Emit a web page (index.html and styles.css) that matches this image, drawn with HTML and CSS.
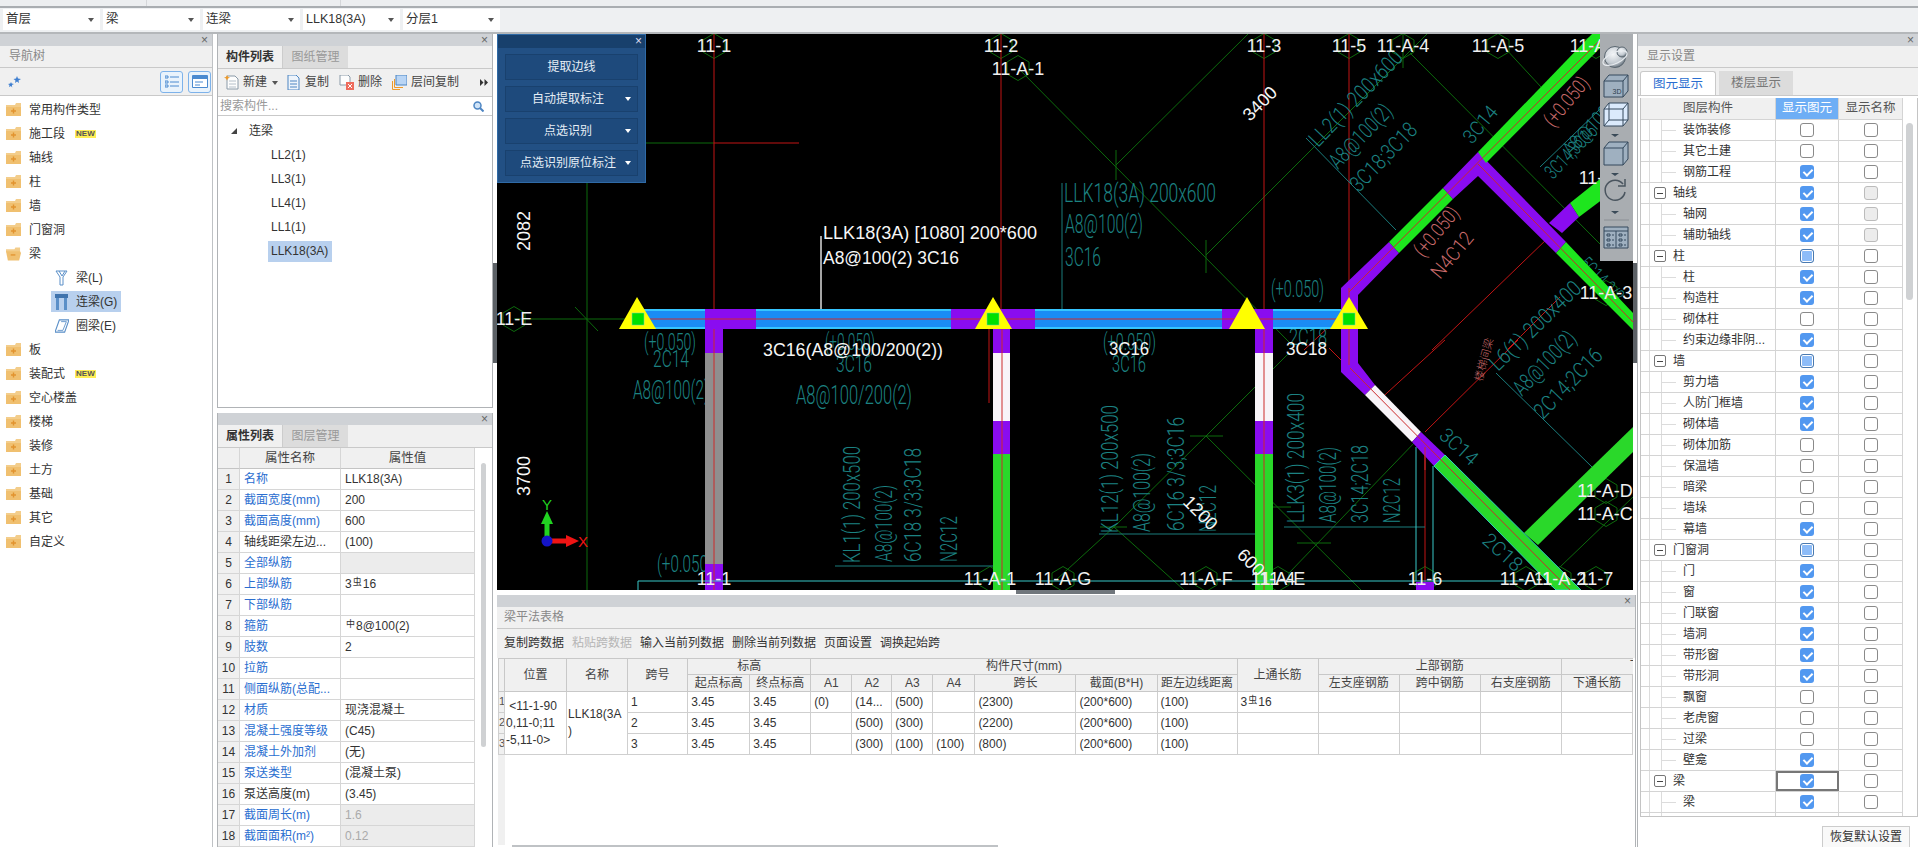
FILE: index.html
```html
<!DOCTYPE html>
<html lang="zh-CN">
<head>
<meta charset="utf-8">
<title>梁平法表格</title>
<link rel="stylesheet" href="styles.css">
</head>
<body>
<svg class="sprite" width="0" height="0">
  <defs>
    <symbol id="folder" viewBox="0 0 15 14"><path d="M0 2h9l1-2h5v13H0z" fill="#f3cd8b"/><path d="M0 4h15v9H0z" fill="#f0c070"/><path d="M7.5 5.5v5M5 8h5" stroke="#e2932f" stroke-width="1.4"/></symbol>
    <symbol id="folder-open" viewBox="0 0 16 14"><path d="M0 2h9l1-2h5v5H0z" fill="#f3cd8b"/><path d="M0 4h15l1 2-2 8H2z" fill="#f0c070"/><path d="M5 8h5" stroke="#e2932f" stroke-width="1.4"/></symbol>
    <polygon id="hx" points="0,-12.5 11,-6 11,6 0,12.5 -11,6 -11,-6" fill="none" stroke="#0d6a0d"/>
  </defs>
</svg>
<div class="app">
  <div class="topstrip"></div>
  <div class="combos">
    <div class="combo">首层<i class="caret"></i></div>
    <div class="combo">梁<i class="caret"></i></div>
    <div class="combo">连梁<i class="caret"></i></div>
    <div class="combo">LLK18(3A)<i class="caret"></i></div>
    <div class="combo">分层1<i class="caret"></i></div>
  </div>
  <div class="main">
    <section class="nav">
      <div class="titlebar"><span class="x">×</span></div>
      <div class="pane-head">导航树</div>
      <div class="nav-tools">
        <svg class="star" width="14" height="12" viewBox="0 0 14 12"><path d="M9 0l1 2.5L13 3l-2.500 1.500L11 7 9 5.500 7 7l.5-2.500L5.500 3 8 2.500zM3 6l.7 1.600L6 8 3.900 9 4.200 11.500 3 10 1 11l.5-2L0 8l2.300-.4z" fill="#3f7fd0"/></svg>
        <span class="ibtn"><svg width="14" height="13" viewBox="0 0 14 13"><path d="M0 1h3v2H0zM5 2h9M0 6h3v2H0zM5 7h9M0 10h3v2H0zM5 11h9" fill="none" stroke="#4a8ad0"/></svg></span>
        <span class="ibtn"><svg width="16" height="13" viewBox="0 0 16 13"><path d="M.5.5h15v12H.500z" fill="#fff" stroke="#4a8ad0"/><path d="M1 1h14v3H1z" fill="#4a8ad0"/><path d="M3 7h8M3 10h5" stroke="#4a8ad0"/></svg></span>
      </div>
      <ul class="nav-list">
        <li class="nav-item"><svg class="fd"><use href="#folder"/></svg>常用构件类型</li>
        <li class="nav-item"><svg class="fd"><use href="#folder"/></svg>施工段<span class="new">NEW</span></li>
        <li class="nav-item"><svg class="fd"><use href="#folder"/></svg>轴线</li>
        <li class="nav-item"><svg class="fd"><use href="#folder"/></svg>柱</li>
        <li class="nav-item"><svg class="fd"><use href="#folder"/></svg>墙</li>
        <li class="nav-item"><svg class="fd"><use href="#folder"/></svg>门窗洞</li>
        <li class="nav-item"><svg class="fd"><use href="#folder-open"/></svg>梁</li>
        <li class="nav-sub"><svg class="si" viewBox="0 0 14 16"><path d="M1 1h11L8 7v8H5V7zM4 1l3 5 3-5" fill="none" stroke="#5a8fc8"/></svg>梁(L)</li>
        <li class="nav-sub sel"><svg class="si" viewBox="0 0 14 16"><path d="M0 0h13v4H0z" fill="#3f73ad"/><path d="M1 4h3v12H1zM9 4h3v12H9z" fill="#5a8fc8"/></svg>连梁(G)</li>
        <li class="nav-sub"><svg class="si" viewBox="0 0 16 16"><path d="M5 1h11l-5 14H0z" fill="none" stroke="#5a8fc8" stroke-width="1.300"/><path d="M7 3h6l-4 10H3" fill="none" stroke="#5a8fc8"/></svg>圈梁(E)</li>
        <li class="nav-item"><svg class="fd"><use href="#folder"/></svg>板</li>
        <li class="nav-item"><svg class="fd"><use href="#folder"/></svg>装配式<span class="new">NEW</span></li>
        <li class="nav-item"><svg class="fd"><use href="#folder"/></svg>空心楼盖</li>
        <li class="nav-item"><svg class="fd"><use href="#folder"/></svg>楼梯</li>
        <li class="nav-item"><svg class="fd"><use href="#folder"/></svg>装修</li>
        <li class="nav-item"><svg class="fd"><use href="#folder"/></svg>土方</li>
        <li class="nav-item"><svg class="fd"><use href="#folder"/></svg>基础</li>
        <li class="nav-item"><svg class="fd"><use href="#folder"/></svg>其它</li>
        <li class="nav-item"><svg class="fd"><use href="#folder"/></svg>自定义</li>
      </ul>
    </section>

    <div class="midcol">
      <section class="panel list-panel">
        <div class="titlebar"><span class="x">×</span></div>
        <div class="tabs"><span class="tab on">构件列表</span><span class="tab">图纸管理</span></div>
        <div class="list-tools">
          <svg class="ti" viewBox="0 0 15 15"><path d="M3 1h8l3 3v10H3z" fill="#fdfdfd" stroke="#8a9aa8"/><path d="M5 6h7M5 9h7M5 12h7" stroke="#b5c0ca"/><path d="M3 0l1 2 2 .5-2 1-1 2-1-2-2-1 2-.5z" fill="#ee9a2a"/></svg>
          <span class="tl">新建</span><i class="caret dark"></i>
          <svg class="ti" viewBox="0 0 15 15"><path d="M2 0h8l3 3v12H2z" fill="#eef4fb" stroke="#4d85c2"/><path d="M4 6h7M4 9h7M4 12h7" stroke="#4d85c2"/></svg>
          <span class="tl">复制</span>
          <svg class="ti" viewBox="0 0 15 15"><path d="M1 0h8l2 2v8H1z" fill="#fdfdfd" stroke="#8a9aa8"/><path d="M7 7h8v8H7z" fill="#ee6b5c"/><path d="M9 9l4 4M13 9l-4 4" stroke="#fff"/></svg>
          <span class="tl">删除</span>
          <svg class="ti" viewBox="0 0 15 15"><path d="M4 0h11v10H4z" fill="#b9d5f5" stroke="#4d85c2"/><path d="M2.500 4v8.500H11M.5 6v8.500H8" fill="none" stroke="#ee9a2a"/></svg>
          <span class="tl">层间复制</span>
          <svg class="more" width="8" height="7" viewBox="0 0 8 7"><path d="M0 0l3.500 3.500L0 7zM4.500 0L8 3.500 4.500 7z" fill="#333"/></svg>
        </div>
        <div class="search"><span>搜索构件...</span><svg width="11" height="11" viewBox="0 0 11 11"><circle cx="4.500" cy="4.500" r="3.500" fill="#cfe3f7" stroke="#4d85c2" stroke-width="1.500"/><path d="M7 7l3.500 3.500" stroke="#4d85c2" stroke-width="2"/></svg></div>
        <div class="tree">
          <div class="tree-root"><i class="tri"></i>连梁</div>
          <div class="tree-leaf"><span>LL2(1)</span></div>
          <div class="tree-leaf"><span>LL3(1)</span></div>
          <div class="tree-leaf"><span>LL4(1)</span></div>
          <div class="tree-leaf"><span>LL1(1)</span></div>
          <div class="tree-leaf"><span class="sel">LLK18(3A)</span></div>
        </div>
      </section>
      <section class="panel attr-panel">
        <div class="titlebar"><span class="x">×</span></div>
        <div class="tabs"><span class="tab on">属性列表</span><span class="tab">图层管理</span></div>
        <div class="attr-body">
          <div class="attr-grid">
            <div class="ah n"></div><div class="ah">属性名称</div><div class="ah">属性值</div>
            <div class="n">1</div><div class="k">名称</div><div class="v">LLK18(3A)</div>
            <div class="n">2</div><div class="k">截面宽度(mm)</div><div class="v">200</div>
            <div class="n">3</div><div class="k">截面高度(mm)</div><div class="v">600</div>
            <div class="n">4</div><div class="k blk">轴线距梁左边...</div><div class="v">(100)</div>
            <div class="n">5</div><div class="k">全部纵筋</div><div class="v dis"></div>
            <div class="n">6</div><div class="k">上部纵筋</div><div class="v">3<sup class="rb">虫</sup>16</div>
            <div class="n">7</div><div class="k">下部纵筋</div><div class="v"></div>
            <div class="n">8</div><div class="k">箍筋</div><div class="v"><sup class="rb">中</sup>8@100(2)</div>
            <div class="n">9</div><div class="k">肢数</div><div class="v">2</div>
            <div class="n">10</div><div class="k">拉筋</div><div class="v"></div>
            <div class="n">11</div><div class="k">侧面纵筋(总配...</div><div class="v"></div>
            <div class="n">12</div><div class="k">材质</div><div class="v">现浇混凝土</div>
            <div class="n">13</div><div class="k">混凝土强度等级</div><div class="v">(C45)</div>
            <div class="n">14</div><div class="k">混凝土外加剂</div><div class="v">(无)</div>
            <div class="n">15</div><div class="k">泵送类型</div><div class="v">(混凝土泵)</div>
            <div class="n">16</div><div class="k blk">泵送高度(m)</div><div class="v">(3.45)</div>
            <div class="n">17</div><div class="k">截面周长(m)</div><div class="v dis gr">1.6</div>
            <div class="n">18</div><div class="k">截面面积(m²)</div><div class="v dis gr">0.12</div>
          </div>
          <div class="attr-track"><div class="attr-thumb"></div></div>
        </div>
      </section>
    </div>
    <div class="split"></div>

    <div class="center">
      <div class="view-row">
        <div class="viewport">
          <svg class="cad" width="1136" height="556" viewBox="497 34 1136 556" xmlns="http://www.w3.org/2000/svg">
            <rect x="497" y="34" width="1136" height="556" fill="#000"/>
            <g class="gl">
              <path d="M587 182V590M514 319H625M575 307L598 331M646 143H714"/>
              <path d="M1018 68L1289 342M1116 165L1248 34M1206 255L1427 34M1410 53L1600 244M1504 47L1541 87"/>
              <path d="M1116 150V180M1206 240V273M1403 34V68"/>
              <path d="M1056 580L1114 527L1206 436L1289 353M1114 527L1184 590M1206 436L1361 590M1289 573L1417 440"/>
              <path d="M1190 436H1223M1100 527H1127M1261 507H1291M1297 543H1331"/>
              <path d="M1560 567L1633 497"/>
            </g>
            <use href="#hx" x="714" y="46"/><use href="#hx" x="1001" y="46"/><use href="#hx" x="1018" y="68"/>
            <use href="#hx" x="1264" y="46"/><use href="#hx" x="1349" y="46"/><use href="#hx" x="1403" y="46"/><use href="#hx" x="1498" y="46"/><use href="#hx" x="1596" y="46"/>
            <use href="#hx" x="514" y="319"/><use href="#hx" x="1606" y="293"/><use href="#hx" x="1606" y="491"/><use href="#hx" x="1606" y="514"/>
            <use href="#hx" x="990" y="579"/><use href="#hx" x="1063" y="579"/><use href="#hx" x="1206" y="579"/><use href="#hx" x="1278" y="579"/><use href="#hx" x="1425" y="579"/><use href="#hx" x="1526" y="579"/><use href="#hx" x="1560" y="579"/><use href="#hx" x="1596" y="579"/>

            <g class="rl">
              <path d="M714 34V309M1001 34V309M1264 34V309M1349 34V309M714 143H799M989 329V403"/>
              <path d="M1304 350L1349 308M1376 403L1445 340M1425 432L1518 340M1432 350L1549 237M1507 350L1560 297M1329 348L1376 395"/>
              <path d="M1425 447V590"/>
            </g>

            <g class="t-t">
              <text x="1064" y="202" textLength="152" lengthAdjust="spacingAndGlyphs" font-size="25">LLK18(3A) 200x600</text>
              <text x="1065" y="233" textLength="78" lengthAdjust="spacingAndGlyphs" font-size="25">A8@100(2)</text>
              <text x="1065" y="266" textLength="36" lengthAdjust="spacingAndGlyphs" font-size="25">3C16</text>
              <text x="1271" y="297" textLength="53" lengthAdjust="spacingAndGlyphs" font-size="24">(+0.050)</text>
              <text x="644" y="350" textLength="52" lengthAdjust="spacingAndGlyphs" font-size="24">(+0.050)</text>
              <text x="653" y="367" textLength="36" lengthAdjust="spacingAndGlyphs" font-size="24">2C14</text>
              <text x="633" y="399" textLength="76" lengthAdjust="spacingAndGlyphs" font-size="25">A8@100(2)</text>
              <text x="825" y="350" textLength="50" lengthAdjust="spacingAndGlyphs" font-size="24">(+0.050)</text>
              <text x="836" y="372" textLength="36" lengthAdjust="spacingAndGlyphs" font-size="24">3C16</text>
              <text x="796" y="404" textLength="116" lengthAdjust="spacingAndGlyphs" font-size="25">A8@100/200(2)</text>
              <text x="1103" y="350" textLength="53" lengthAdjust="spacingAndGlyphs" font-size="24">(+0.050)</text>
              <text x="1112" y="372" textLength="34" lengthAdjust="spacingAndGlyphs" font-size="24">3C16</text>
              <text x="1289" y="345" textLength="38" lengthAdjust="spacingAndGlyphs" font-size="24">2C18</text>
              <text x="657" y="572" textLength="51" lengthAdjust="spacingAndGlyphs" font-size="24">(+0.050</text>

              <text transform="translate(860,563) rotate(-90)" textLength="117" lengthAdjust="spacingAndGlyphs" font-size="24">KL1(1) 200x500</text>
              <text transform="translate(892,562) rotate(-90)" textLength="77" lengthAdjust="spacingAndGlyphs" font-size="24">A8@100(2)</text>
              <text transform="translate(921,562) rotate(-90)" textLength="114" lengthAdjust="spacingAndGlyphs" font-size="24">6C18 3/3;3C18</text>
              <text transform="translate(957,562) rotate(-90)" textLength="46" lengthAdjust="spacingAndGlyphs" font-size="24">N2C12</text>
              <text transform="translate(1118,533) rotate(-90)" textLength="128" lengthAdjust="spacingAndGlyphs" font-size="24">KL12(1) 200x500</text>
              <text transform="translate(1150,532) rotate(-90)" textLength="79" lengthAdjust="spacingAndGlyphs" font-size="24">A8@100(2)</text>
              <text transform="translate(1184,531) rotate(-90)" textLength="114" lengthAdjust="spacingAndGlyphs" font-size="24">6C16 3/3;3C16</text>
              <text transform="translate(1216,532) rotate(-90)" textLength="47" lengthAdjust="spacingAndGlyphs" font-size="24">N2C12</text>
              <text transform="translate(1304,523) rotate(-90)" textLength="130" lengthAdjust="spacingAndGlyphs" font-size="24">LLK3(1) 200x400</text>
              <text transform="translate(1336,523) rotate(-90)" textLength="76" lengthAdjust="spacingAndGlyphs" font-size="24">A8@100(2)</text>
              <text transform="translate(1368,523) rotate(-90)" textLength="78" lengthAdjust="spacingAndGlyphs" font-size="24">3C14;2C18</text>
              <text transform="translate(1400,523) rotate(-90)" textLength="45" lengthAdjust="spacingAndGlyphs" font-size="24">N2C12</text>

              <text transform="translate(1318,148) rotate(-46)" textLength="124" lengthAdjust="spacingAndGlyphs" font-size="22">LL2(1) 200x600</text>
              <text transform="translate(1338,170) rotate(-46)" textLength="80" lengthAdjust="spacingAndGlyphs" font-size="22">A8@100(2)</text>
              <text transform="translate(1359,193) rotate(-46)" textLength="86" lengthAdjust="spacingAndGlyphs" font-size="22">3C18;3C18</text>
              <text transform="translate(1472,145) rotate(-50)" textLength="42" lengthAdjust="spacingAndGlyphs" font-size="20">3C14</text>
              <text transform="translate(1571,157) rotate(-46)" textLength="60" lengthAdjust="spacingAndGlyphs" font-size="20">A8@100</text>
              <text transform="translate(1553,180) rotate(-46)" textLength="66" lengthAdjust="spacingAndGlyphs" font-size="20">3C14;3C16</text>
              <text transform="translate(1438,437) rotate(42)" textLength="44" lengthAdjust="spacingAndGlyphs" font-size="20">3C14</text>
              <text transform="translate(1481,542) rotate(42)" textLength="46" lengthAdjust="spacingAndGlyphs" font-size="20">2C18</text>
              <text transform="translate(1498,372) rotate(-44)" textLength="118" lengthAdjust="spacingAndGlyphs" font-size="22">L6(1) 200x400</text>
              <text transform="translate(1522,397) rotate(-46)" textLength="80" lengthAdjust="spacingAndGlyphs" font-size="22">A8@100(2)</text>
              <text transform="translate(1543,420) rotate(-46)" textLength="88" lengthAdjust="spacingAndGlyphs" font-size="22">2C14;2C16</text>
              <text transform="translate(1578,265) rotate(46)" textLength="54" lengthAdjust="spacingAndGlyphs" font-size="20">5C14 3/2</text>
            </g>
            <g class="tl-line">
              <path d="M1062 183V309M1306 138L1396 230M1540 167L1600 109M835 566H993M1099 534H1264M1284 527H1425M1496 373L1592 467"/>
            </g>
            <g class="t-s">
              <text transform="translate(1553,128) rotate(-50)" textLength="58" lengthAdjust="spacingAndGlyphs" font-size="20">(+0.050)</text>
              <text transform="translate(1423,258) rotate(-50)" textLength="58" lengthAdjust="spacingAndGlyphs" font-size="20">(+0.050)</text>
              <text transform="translate(1440,280) rotate(-50)" textLength="54" lengthAdjust="spacingAndGlyphs" font-size="20">N4C12</text>
              <text transform="translate(1482,382) rotate(-75)" font-size="11">楼梯间梁</text>
            </g>

            <rect class="bm-b" x="639" y="309" width="702" height="20"/>
            <path class="bm-c" d="M639 310H1341M639 328H1341"/>
            <rect class="pu" x="705" y="309" width="51" height="20"/>
            <rect class="pu" x="951" y="309" width="84" height="20"/>
            <rect class="pu" x="1222" y="309" width="51" height="20"/>

            <rect class="pu" x="705" y="329" width="18" height="24"/>
            <rect class="gy" x="705" y="353" width="18" height="211"/>
            <rect class="pu" x="705" y="564" width="18" height="26"/>

            <rect class="pu" x="993" y="329" width="17" height="24"/>
            <rect class="wh" x="993" y="353" width="17" height="68"/>
            <rect class="pu" x="993" y="421" width="17" height="33"/>
            <rect class="gn2" x="993" y="454" width="17" height="136"/>

            <rect class="pu" x="1255" y="329" width="18" height="24"/>
            <rect class="wh" x="1255" y="353" width="18" height="68"/>
            <rect class="pu" x="1255" y="421" width="18" height="33"/>
            <rect class="gn2" x="1255" y="454" width="18" height="136"/>

            <polygon class="pu" points="1341,288 1389,242 1399,253 1358,295 1358,363 1375,385 1365,395 1341,372"/>
            <polygon class="gn" points="1389,242 1443,188 1453,199 1399,253"/>
            <polygon class="pu" points="1443,188 1478,152 1566,242 1556,253 1478,176 1453,199"/>
            <polygon class="gn" points="1478,152 1592,34 1614,34 1486,163"/>
            <polygon class="gn" points="1566,242 1633,313 1633,330 1556,253"/>
            <polygon class="pu" points="1549,223 1570,203 1579,217 1562,233"/>
            <polygon class="gn" points="1570,203 1605,175 1615,190 1579,217"/>
            <polygon class="wh" points="1375,385 1421,432 1412,442 1365,395"/>
            <polygon class="pu" points="1421,432 1445,455 1434,466 1412,442"/>
            <polygon class="gn2" points="1524,533 1538,545 1633,452 1633,427"/>
            <polygon class="gn2 cy" points="1445,455 1581,590 1556,590 1434,466"/>
            <rect class="pu" x="1416" y="582" width="18" height="8"/>

            <g class="rl2">
              <path d="M639 319H1341"/>
              <path d="M714 329V590M1002 329V590M1264 329V590M1349 288V365"/>
              <path d="M1349 292L1600 40M1478 164L1633 322M1350 368L1570 590M1425 447V470"/>
            </g>
            <path class="leader" d="M821 236V309"/>

            <polygon class="tri-y" points="637,297 619,329 656,329"/><rect class="gsq" x="632" y="313" width="12" height="12"/>
            <polygon class="tri-y" points="993,297 975,329 1012,329"/><rect class="gsq" x="987" y="313" width="12" height="12"/>
            <polygon class="tri-y" points="1247,297 1229,329 1265,329"/>
            <polygon class="tri-y" points="1349,297 1330,329 1368,329"/><rect class="gsq" x="1343" y="313" width="12" height="12"/>

            <path class="cy-line" d="M638 590V581H1534M1416 447V581M1433 466V581"/>

            <g class="t-lb">
              <text x="714" y="52">11-1</text><text x="1001" y="52">11-2</text><text x="1018" y="75">11-A-1</text>
              <text x="1264" y="52">11-3</text><text x="1349" y="52">11-5</text><text x="1403" y="52">11-A-4</text>
              <text x="1498" y="52">11-A-5</text><text x="1596" y="52">11-A-6</text>
              <text x="514" y="325">11-E</text>
              <text x="1606" y="299">11-A-3</text><text x="1606" y="184">11-A-B</text><text x="1605" y="497">11-A-D</text><text x="1605" y="520">11-A-C</text>
              <text x="714" y="585">11-1</text><text x="990" y="585">11-A-1</text><text x="1063" y="585">11-A-G</text><text x="1206" y="585">11-A-F</text>
              <text x="1278" y="585">11-4</text><text x="1278" y="585">11-A-E</text><text x="1425" y="585">11-6</text>
              <text x="1526" y="585">11-A-1</text><text x="1560" y="585">11-A-2</text><text x="1596" y="585">11-7</text>
            </g>
            <g class="t-w">
              <text x="823" y="239" textLength="214" lengthAdjust="spacingAndGlyphs">LLK18(3A) [1080] 200*600</text>
              <text x="823" y="264" textLength="136" lengthAdjust="spacingAndGlyphs">A8@100(2) 3C16</text>
              <text x="763" y="356" textLength="180" lengthAdjust="spacingAndGlyphs">3C16(A8@100/200(2))</text>
              <text x="1109" y="355" textLength="40" lengthAdjust="spacingAndGlyphs">3C16</text>
              <text x="1286" y="355" textLength="41" lengthAdjust="spacingAndGlyphs">3C18</text>
              <text transform="translate(530,251) rotate(-90)">2082</text>
              <text transform="translate(530,496) rotate(-90)">3700</text>
              <text transform="translate(1250,122) rotate(-45)">3400</text>
              <text transform="translate(1182,503) rotate(45)">1200</text>
              <text transform="translate(1236,556) rotate(45)">600</text>
            </g>

            <path d="M547 541V520" stroke="#21d321" stroke-width="5"/><path d="M541 524l6-13 6 13z" fill="#21d321"/>
            <path d="M547 541H568" stroke="#f01414" stroke-width="5"/><path d="M566 535l13 6-13 6z" fill="#f01414"/>
            <circle cx="547" cy="541" r="5.500" fill="#1414c8"/>
            <text class="t-y" x="547" y="510">Y</text><text class="t-x" x="583" y="547">X</text>
          </svg>

          <div class="float-panel">
            <div class="fp-title"><span class="x lt">×</span></div>
            <div class="fp-body">
              <div class="fp-btn">提取边线</div>
              <div class="fp-btn arrow">自动提取标注<i class="caret wt"></i></div>
              <div class="fp-btn arrow">点选识别<i class="caret wt"></i></div>
              <div class="fp-btn arrow">点选识别原位标注<i class="caret wt"></i></div>
            </div>
          </div>

          <svg class="viewbar" width="33" height="227" viewBox="0 0 33 227" xmlns="http://www.w3.org/2000/svg">
            <defs>
              <radialGradient id="glob" cx="0.4" cy="0.35" r="0.75"><stop offset="0" stop-color="#f6f8fa"/><stop offset="0.6" stop-color="#c3cad1"/><stop offset="1" stop-color="#4c5964"/></radialGradient>
            </defs>
            <rect width="33" height="227" fill="#a9adb1"/>
            <circle cx="15" cy="23" r="10.500" fill="url(#glob)" stroke="#5a6670"/>
            <circle cx="22" cy="18" r="5" fill="url(#glob)" stroke="#5a6670"/>
            <ellipse cx="15" cy="24" rx="13" ry="5.500" fill="none" stroke="#e8ecf0" stroke-width="1.200" transform="rotate(-25 15 24)"/>

            <path class="bx" d="M9 41h19v16l-5 6H4V47z"/><path class="bl" d="M4 47h19v16M23 47l5-6"/>
            <text class="t3d" x="17" y="60">3D</text>

            <path class="bx lite" d="M9 69h19v17l-5 6H4V75z"/><path class="bl" d="M4 75h19v17M23 75l5-6M9 69v17h19M9 86l-5 6"/>
            <path class="arw" d="M11 100h8l-4 3z"/>

            <path class="bx" d="M9 108h19v17l-5 6H4v-17z"/><path class="bl" d="M4 114h19v17M23 114l5-6"/>
            <path class="arw" d="M11 139h8l-4 3z"/>

            <path d="M23 150a10 10 0 1 0 2 8M25 145v7h-7" fill="none" stroke="#4a555f" stroke-width="1.500"/>
            <path class="arw" d="M11 177h8l-4 3z"/>
            <path d="M4 186h25" stroke="#8a8f94"/>

            <path class="bx" d="M4 193h24v21H4z"/>
            <path class="bl" d="M4 197h24M16 197v17M7 200h3v2H7zM12 201h2M19 200h3v2h-3zM24 201h2M7 205h3v2H7zM12 206h2M19 205h3v2h-3zM24 206h2M7 210h3v2H7zM12 211h2M19 210h3v2h-3zM24 211h2"/>
          </svg>
        </div>
        <div class="vscroll"><div class="vthumb"></div></div>
      </div>
      <div class="hscroll"><div class="hthumb"></div></div>

      <section class="table-panel">
        <div class="titlebar"><span class="x">×</span></div>
        <div class="pane-head">梁平法表格</div>
        <div class="tbl-tools">
          <span>复制跨数据</span><span class="off">粘贴跨数据</span><span>输入当前列数据</span><span>删除当前列数据</span><span>页面设置</span><span>调换起始跨</span>
        </div>
        <div class="tbl-wrap">
          <table class="ptable">
            <colgroup>
              <col class="c0"><col class="c62"><col class="c61"><col class="c60"><col class="c62"><col class="c61">
              <col class="c41"><col class="c40"><col class="c41"><col class="c42"><col class="c101"><col class="c81">
              <col class="c80"><col class="c81"><col class="c81"><col class="c81"><col class="c81"><col class="c72">
            </colgroup>
            <thead>
              <tr><th rowspan="2"></th><th rowspan="2">位置</th><th rowspan="2">名称</th><th rowspan="2">跨号</th><th colspan="2">标高</th><th colspan="7">构件尺寸(mm)</th><th rowspan="2">上通长筋</th><th colspan="3">上部钢筋</th><th class="clip">下部钢筋</th></tr>
              <tr><th>起点标高</th><th>终点标高</th><th>A1</th><th>A2</th><th>A3</th><th>A4</th><th>跨长</th><th>截面(B*H)</th><th>距左边线距离</th><th>左支座钢筋</th><th>跨中钢筋</th><th>右支座钢筋</th><th>下通长筋</th></tr>
            </thead>
            <tbody>
              <tr><td class="idx">1</td><td rowspan="3" class="wrap">&nbsp;&lt;11-1-90<br>0,11-0;11<br>-5,11-0&gt;</td><td rowspan="3" class="wrap">LLK18(3A<br>)</td><td>1</td><td>3.45</td><td>3.45</td><td>(0)</td><td>(14...</td><td>(500)</td><td></td><td>(2300)</td><td>(200*600)</td><td>(100)</td><td>3<sup class="rb">虫</sup>16</td><td></td><td></td><td></td><td></td></tr>
              <tr><td class="idx">2</td><td>2</td><td>3.45</td><td>3.45</td><td></td><td>(500)</td><td>(300)</td><td></td><td>(2200)</td><td>(200*600)</td><td>(100)</td><td></td><td></td><td></td><td></td><td></td></tr>
              <tr><td class="idx">3</td><td>3</td><td>3.45</td><td>3.45</td><td></td><td>(300)</td><td>(100)</td><td>(100)</td><td>(800)</td><td>(200*600)</td><td>(100)</td><td></td><td></td><td></td><td></td><td></td></tr>
            </tbody>
          </table>
          <div class="tbl-rest"></div>
          <div class="tbl-hbar"></div>
        </div>
      </section>
    </div>

    <section class="right">
      <div class="titlebar"><span class="x">×</span></div>
      <div class="pane-head">显示设置</div>
      <div class="rtabs"><span class="rtab on">图元显示</span><span class="rtab">楼层显示</span></div>
      <div class="sgrid-wrap">
        <div class="sgrid">
          <div class="srow shead"><div>图层构件</div><div class="hl">显示图元</div><div>显示名称</div></div>
          <div class="srow"><div class="nm ch">装饰装修</div><div class="cb"><i class="ck"></i></div><div class="cb"><i class="ck"></i></div></div>
          <div class="srow"><div class="nm ch">其它土建</div><div class="cb"><i class="ck"></i></div><div class="cb"><i class="ck"></i></div></div>
          <div class="srow"><div class="nm ch">钢筋工程</div><div class="cb"><i class="ck on"></i></div><div class="cb"><i class="ck"></i></div></div>
          <div class="srow"><div class="nm pa"><i class="minus"></i>轴线</div><div class="cb"><i class="ck on"></i></div><div class="cb"><i class="ck dim"></i></div></div>
          <div class="srow"><div class="nm ch">轴网</div><div class="cb"><i class="ck on"></i></div><div class="cb"><i class="ck dim"></i></div></div>
          <div class="srow"><div class="nm ch">辅助轴线</div><div class="cb"><i class="ck on"></i></div><div class="cb"><i class="ck dim"></i></div></div>
          <div class="srow"><div class="nm pa"><i class="minus"></i>柱</div><div class="cb"><i class="ck part"></i></div><div class="cb"><i class="ck"></i></div></div>
          <div class="srow"><div class="nm ch">柱</div><div class="cb"><i class="ck on"></i></div><div class="cb"><i class="ck"></i></div></div>
          <div class="srow"><div class="nm ch">构造柱</div><div class="cb"><i class="ck on"></i></div><div class="cb"><i class="ck"></i></div></div>
          <div class="srow"><div class="nm ch">砌体柱</div><div class="cb"><i class="ck"></i></div><div class="cb"><i class="ck"></i></div></div>
          <div class="srow"><div class="nm ch">约束边缘非阴...</div><div class="cb"><i class="ck on"></i></div><div class="cb"><i class="ck"></i></div></div>
          <div class="srow"><div class="nm pa"><i class="minus"></i>墙</div><div class="cb"><i class="ck part"></i></div><div class="cb"><i class="ck"></i></div></div>
          <div class="srow"><div class="nm ch">剪力墙</div><div class="cb"><i class="ck on"></i></div><div class="cb"><i class="ck"></i></div></div>
          <div class="srow"><div class="nm ch">人防门框墙</div><div class="cb"><i class="ck on"></i></div><div class="cb"><i class="ck"></i></div></div>
          <div class="srow"><div class="nm ch">砌体墙</div><div class="cb"><i class="ck on"></i></div><div class="cb"><i class="ck"></i></div></div>
          <div class="srow"><div class="nm ch">砌体加筋</div><div class="cb"><i class="ck"></i></div><div class="cb"><i class="ck"></i></div></div>
          <div class="srow"><div class="nm ch">保温墙</div><div class="cb"><i class="ck"></i></div><div class="cb"><i class="ck"></i></div></div>
          <div class="srow"><div class="nm ch">暗梁</div><div class="cb"><i class="ck"></i></div><div class="cb"><i class="ck"></i></div></div>
          <div class="srow"><div class="nm ch">墙垛</div><div class="cb"><i class="ck"></i></div><div class="cb"><i class="ck"></i></div></div>
          <div class="srow"><div class="nm ch">幕墙</div><div class="cb"><i class="ck on"></i></div><div class="cb"><i class="ck"></i></div></div>
          <div class="srow"><div class="nm pa"><i class="minus"></i>门窗洞</div><div class="cb"><i class="ck part"></i></div><div class="cb"><i class="ck"></i></div></div>
          <div class="srow"><div class="nm ch">门</div><div class="cb"><i class="ck on"></i></div><div class="cb"><i class="ck"></i></div></div>
          <div class="srow"><div class="nm ch">窗</div><div class="cb"><i class="ck on"></i></div><div class="cb"><i class="ck"></i></div></div>
          <div class="srow"><div class="nm ch">门联窗</div><div class="cb"><i class="ck on"></i></div><div class="cb"><i class="ck"></i></div></div>
          <div class="srow"><div class="nm ch">墙洞</div><div class="cb"><i class="ck on"></i></div><div class="cb"><i class="ck"></i></div></div>
          <div class="srow"><div class="nm ch">带形窗</div><div class="cb"><i class="ck on"></i></div><div class="cb"><i class="ck"></i></div></div>
          <div class="srow"><div class="nm ch">带形洞</div><div class="cb"><i class="ck on"></i></div><div class="cb"><i class="ck"></i></div></div>
          <div class="srow"><div class="nm ch">飘窗</div><div class="cb"><i class="ck"></i></div><div class="cb"><i class="ck"></i></div></div>
          <div class="srow"><div class="nm ch">老虎窗</div><div class="cb"><i class="ck"></i></div><div class="cb"><i class="ck"></i></div></div>
          <div class="srow"><div class="nm ch">过梁</div><div class="cb"><i class="ck"></i></div><div class="cb"><i class="ck"></i></div></div>
          <div class="srow"><div class="nm ch">壁龛</div><div class="cb"><i class="ck on"></i></div><div class="cb"><i class="ck"></i></div></div>
          <div class="srow"><div class="nm pa"><i class="minus"></i>梁</div><div class="cb focus"><i class="ck on"></i></div><div class="cb"><i class="ck"></i></div></div>
          <div class="srow"><div class="nm ch">梁</div><div class="cb"><i class="ck on"></i></div><div class="cb"><i class="ck"></i></div></div>
          <div class="srow"><div class="nm ch">连梁</div><div class="cb"><i class="ck on"></i></div><div class="cb"><i class="ck"></i></div></div>
        </div>
        <div class="strack"><div class="sthumb"></div></div>
      </div>
      <div class="rfoot"><span class="rbtn">恢复默认设置</span></div>
    </section>
  </div>
</div>
</body>
</html>
```
FILE: styles.css
```css
* { box-sizing: border-box; }
html, body { margin: 0; padding: 0; height: 100%; overflow: hidden; background: #fff; }
body { font: 12px/1.2 "Liberation Sans", "Noto Sans CJK SC", sans-serif; color: #222; }
ul { margin: 0; padding: 0; list-style: none; }
.sprite { display: block; height: 0; }
.app { width: 1918px; height: 847px; display: flex; flex-direction: column; overflow: hidden; }

.topstrip { height: 8px; flex: none; border-bottom: 2px solid #a9adb1; background: linear-gradient(#d5d7da, #d5d7da) 146px 0 / 1px 6px no-repeat, linear-gradient(#d5d7da, #d5d7da) 340px 0 / 1px 6px no-repeat, #eceef0; }
.combos { height: 26px; flex: none; display: flex; gap: 3px; padding: 1px 3px 2px; background: #eef0f2; border-bottom: 2px solid #b4b7ba; }
.combo { width: 97px; background: #fff; display: flex; align-items: center; justify-content: space-between; padding: 0 6px 0 3px; font-size: 12.500px; color: #333; }
.caret { width: 0; height: 0; border: 3.500px solid transparent; border-top: 4px solid #555; border-bottom: 0; display: block; flex: none; }
.caret.dark { margin: 0 8px 0 -5px; }
.caret.wt { border-top-color: #fff; }

.main { flex: none; display: flex; height: 813px; }

.titlebar { height: 12px; background: #cfd2d6; display: flex; justify-content: flex-end; padding-right: 4px; flex: none; }
.x { color: #666; font-size: 12px; line-height: 12px; }
.x.lt { color: #dde; }
.pane-head { height: 22px; background: #f0f0f0; color: #888; padding-left: 9px; line-height: 21px; border-bottom: 1px solid #c9c9c9; flex: none; }

.nav { width: 213px; border-right: 1px solid #bfc2c5; display: flex; flex-direction: column; }
.nav-tools { height: 28px; flex: none; background: #f0f0f0; border-bottom: 1px solid #c9c9c9; display: flex; align-items: center; gap: 5px; padding: 0 1px 0 8px; }
.star { margin-right: auto; }
.ibtn { width: 23px; height: 22px; border: 1px solid #7db2ea; border-radius: 3px; background: #e9f3fc; display: flex; align-items: center; justify-content: center; }
.nav-list { padding-top: 2px; }
.nav-item { height: 24px; display: flex; align-items: center; padding-left: 6px; color: #333; }
.fd { width: 15px; height: 14px; margin-right: 8px; }
.new { margin-left: 10px; font-size: 8px; line-height: 8px; background: #ffee55; color: #555; font-weight: bold; padding: 0 1px; }
.nav-sub { height: 24px; display: flex; align-items: center; padding-left: 55px; color: #333; }
.si { width: 14px; height: 16px; margin-right: 7px; }
.nav-sub.sel { background: linear-gradient(#b8d0ee, #b8d0ee) 51px 1px / 70px 21px no-repeat; }

.midcol { width: 276px; margin-left: 4px; display: flex; flex-direction: column; gap: 5px; }
.panel { border: 1px solid #b0b3b6; border-top: 0; display: flex; flex-direction: column; }
.list-panel { height: 375px; }
.attr-panel { height: 434px; border-bottom: 0; }
.tabs { height: 23px; flex: none; background: #f0f0f0; display: flex; border-bottom: 1px solid #c9c9c9; }
.tab { width: 65px; text-align: center; line-height: 22px; font-size: 12px; color: #999; background: #dcdcdc; }
.tab.on { color: #333; background: #f0f0f0; font-weight: bold; border-right: 1px solid #ccc; }
.list-tools { height: 28px; flex: none; background: #f0f0f0; border-bottom: 1px solid #c9c9c9; display: flex; align-items: center; padding-left: 6px; }
.ti { width: 15px; height: 15px; margin-right: 4px; flex: none; }
.tl { margin-right: 10px; color: #444; white-space: nowrap; flex: none; }
.more { margin-left: auto; margin-right: 4px; flex: none; }
.search { height: 19px; flex: none; border-bottom: 1px solid #c9c9c9; display: flex; align-items: center; justify-content: space-between; padding: 0 8px 0 2px; color: #999; }
.tree-root { height: 24px; margin-top: 3px; display: flex; align-items: center; padding-left: 13px; color: #333; }
.tri { width: 0; height: 0; border-style: solid; border-width: 0 0 6px 6px; border-color: transparent transparent #444 transparent; margin-right: 12px; }
.tree-leaf { height: 24px; display: flex; align-items: center; padding-left: 50px; color: #333; }
.tree-leaf span { padding: 0 4px 0 3px; line-height: 21px; }
.tree-leaf .sel { background: #b8d0ee; }

.attr-body { flex: 1; display: flex; overflow: hidden; }
.attr-grid { width: 257px; display: grid; grid-template-columns: 22px 101px 134px; grid-auto-rows: 21px; align-content: start; }
.attr-grid > div { border-bottom: 1px solid #d6d6d6; border-right: 1px solid #d6d6d6; line-height: 20px; white-space: nowrap; overflow: hidden; }
.attr-grid .ah { background: #f0f0f0; text-align: center; color: #444; font-size: 12.500px; border-bottom-color: #c4c4c4; }
.attr-grid .n { background: #f0f0f0; text-align: center; color: #333; }
.attr-grid .k { color: #2a6ed0; padding-left: 4px; }
.attr-grid .k.blk { color: #333; }
.attr-grid .v { padding-left: 4px; color: #333; }
.attr-grid .v.dis { background: #ececec; }
.attr-grid .v.gr { color: #aaa; }
.rb { font-size: 9px; vertical-align: 3px; line-height: 0; margin: 0 1px; }
.attr-track { flex: 1; padding: 15px 6px 0 6px; }
.attr-thumb { height: 284px; background: #cfd1d3; border-radius: 4px; }

.split { width: 4px; height: 100px; margin-top: 229px; background: #5c6166; flex: none; }

.center { width: 1140px; flex: none; display: flex; flex-direction: column; }
.view-row { display: flex; height: 556px; flex: none; }
.viewport { width: 1136px; height: 556px; position: relative; overflow: hidden; }
.cad { display: block; }
.vscroll { width: 4px; padding-top: 229px; }
.vthumb { height: 100px; background: #5c6166; }
.hscroll { height: 5px; flex: none; padding-left: 519px; }
.hthumb { width: 99px; height: 4px; background: #70767c; }

.gl path { fill: none; stroke: #0c6a0c; stroke-width: 1; }
.rl path { fill: none; stroke: #c21414; stroke-width: 1; }
.rl2 path { fill: none; stroke: #cc2a2a; stroke-width: 1; }
.tl-line path { fill: none; stroke: #1a7c7c; stroke-width: 1; }
.t-t text { fill: #1c8282; font-family: Roboto, "Liberation Sans", sans-serif; font-weight: 300; }
.t-s text { fill: #c86a6a; font-family: Roboto, "Liberation Sans", "Noto Sans CJK SC", sans-serif; font-weight: 300; }
.t-lb text { font-size: 18px; fill: #f0f0f0; text-anchor: middle; }
.t-w text { font-size: 18px; fill: #f6f6f6; }
.t-y { fill: #21d321; font-size: 15px; text-anchor: middle; }
.t-x { fill: #f01414; font-size: 15px; text-anchor: middle; }
.bm-b { fill: #1a8cf5; }
.bm-c { stroke: #36c5ff; stroke-width: 2; fill: none; }
.pu { fill: #8a0cf0; }
.gy { fill: #8f8f8f; }
.wh { fill: #f8f4f8; }
.gn { fill: #1ee61e; }
.gn2 { fill: #2ad82a; }
.cy { stroke: #2fd0c0; stroke-width: 1; }
.leader { stroke: #ddd; stroke-width: 1.500; fill: none; }
.tri-y { fill: #ffff00; }
.gsq { fill: #00e000; stroke: #6fd0c0; stroke-width: .5; }
.cy-line { fill: none; stroke: #38c8c8; stroke-width: 1; }

.float-panel { position: absolute; left: 0; top: 0; width: 149px; height: 149px; background: #225084; border: 1px solid #2f6aa6; }
.fp-title { height: 13px; background: #18406c; display: flex; justify-content: flex-end; padding-right: 3px; }
.fp-body { padding: 6px 7px 0; display: flex; flex-direction: column; gap: 6px; }
.fp-btn { height: 26px; background: #1e4a7c; border: 1px solid #19416e; color: #e6eef6; display: flex; align-items: center; justify-content: center; }
.fp-btn.arrow { justify-content: flex-start; }
.fp-btn.arrow .caret { margin-left: auto; margin-right: 6px; }
.fp-btn.arrow:nth-child(2) { padding-left: 26px; }
.fp-btn.arrow:nth-child(3) { padding-left: 38px; }
.fp-btn.arrow:nth-child(4) { padding-left: 14px; }

.viewbar { position: absolute; right: 0; top: 0; display: block; }
.bx { fill: #9fb0c0; stroke: #34495c; stroke-width: 1; }
.bx.lite { fill: #dbeafc; }
.bl { fill: none; stroke: #34495c; stroke-width: 1; }
.arw { fill: #3a4a58; }
.t3d { font-size: 7px; fill: #2d3e4d; text-anchor: middle; }

.table-panel { flex: 1; min-height: 0; width: 1139px; display: flex; flex-direction: column; border-right: 1px solid #b0b3b6; }
.table-panel .pane-head { padding-left: 7px; }
.tbl-tools { height: 29px; flex: none; background: #f0f0f0; display: flex; align-items: center; gap: 8px; padding-left: 7px; color: #333; }
.tbl-tools .off { color: #b5b5b5; }
.tbl-wrap { flex: 1; background: #fff; display: flex; flex-direction: column; min-height: 0; }
.ptable { border-collapse: collapse; table-layout: fixed; width: 1135px; margin-left: 1px; }
.ptable th { background: #f0f0f0; font-weight: normal; color: #444; height: 17px; padding: 0; border: 1px solid #c8c8c8; font-size: 12px; white-space: nowrap; overflow: hidden; text-align: center; }
.ptable thead tr:first-child th { height: 16px; }
.ptable th.clip { text-align: left; padding-left: 68px; border-right: 0; }
.ptable td { height: 21px; padding: 0 0 0 3px; border: 1px solid #cfcfcf; white-space: nowrap; overflow: hidden; color: #333; }
.ptable td.idx { background: #f0f0f0; padding: 0; font-size: 11px; color: #555; }
.ptable td.wrap { line-height: 17px; padding-left: 1px; }
.c0 { width: 6px; } .c62 { width: 62px; } .c61 { width: 61px; } .c60 { width: 60px; } .c41 { width: 41px; } .c40 { width: 40px; } .c42 { width: 42px; } .c101 { width: 101px; } .c81 { width: 81px; } .c80 { width: 80px; } .c72 { width: 71px; }
.tbl-rest { flex: 1; width: 7px; margin-left: 1px; background: #f0f0f0; }
.tbl-hbar { height: 2px; width: 486px; margin-left: 15px; background: #bfc2c5; flex: none; }

.right { flex: 1; border-left: 1px solid #b0b3b6; display: flex; flex-direction: column; background: #fff; }
.rtabs { height: 28px; flex: none; background: #f0f0f0; display: flex; align-items: flex-end; gap: 3px; padding-left: 2px; border-bottom: 1px solid #c9c9c9; }
.rtab { width: 74px; height: 24px; line-height: 24px; text-align: center; background: #dcdcdc; color: #777; font-size: 12.500px; }
.rtab.on { width: 76px; background: #fff; color: #2a6ed0; border: 1px solid #c9c9c9; border-bottom: 0; border-radius: 3px 3px 0 0; }
.sgrid-wrap { margin: 2px 0 0 2px; width: 278px; height: 719px; border: 1px solid #c4c4c4; border-top: 0; display: flex; overflow: hidden; flex: none; }
.sgrid { width: 262px; flex: none; }
.srow { height: 21px; display: grid; grid-template-columns: 135px 63px 64px; border-bottom: 1px solid #d4d4d4; }
.srow > div { border-right: 1px solid #d4d4d4; display: flex; align-items: center; color: #333; white-space: nowrap; }
.shead > div { background: #f0f0f0; justify-content: center; color: #555; font-size: 12.500px; }
.shead { height: 22px; }
.shead > .hl { background: #6eaef5; color: #fff; }
.nm.ch { padding-left: 42px; background: linear-gradient(#dcdcdc, #dcdcdc) 8px 0 / 1px 100% no-repeat, linear-gradient(#dcdcdc, #dcdcdc) 20px 0 / 1px 100% no-repeat, linear-gradient(#dcdcdc, #dcdcdc) 20px 10px / 15px 1px no-repeat; }
.nm.pa { padding-left: 13px; background: linear-gradient(#dcdcdc, #dcdcdc) 8px 0 / 1px 100% no-repeat; }
.minus { width: 12px; height: 12px; border: 1px solid #777; border-radius: 2px; background: linear-gradient(#444, #444) center / 6px 1px no-repeat #fff; margin-right: 7px; }
.srow > .cb { justify-content: center; }
.srow > .cb.focus { outline: 2px solid #777; outline-offset: -2px; }
.ck { width: 14px; height: 14px; border: 1px solid #8a8a8a; border-radius: 3px; background: #fff; display: block; }
.ck.on { border: 0; background: #5298f0; }
.ck.on::after { content: ""; display: block; width: 7px; height: 4px; border-left: 2px solid #fff; border-bottom: 2px solid #fff; transform: translate(3.500px, 3.500px) rotate(-45deg); }
.ck.part { border: 1px solid #4a7ab0; background: #8dbcf8; box-shadow: inset 0 0 0 1px #fff; }
.ck.dim { background: #ececec; border-color: #bbb; }
.strack { flex: 1; padding: 25px 4px 0 3px; }
.sthumb { height: 177px; background: #cfd1d3; border-radius: 4px; }
.rfoot { flex: 1; display: flex; justify-content: flex-end; align-items: flex-end; padding: 0 8px 0 0; }
.rbtn { width: 88px; height: 21px; line-height: 21px; text-align: center; border: 1px solid #ccc; border-bottom: 0; background: #f9f9f9; color: #333; }
```
